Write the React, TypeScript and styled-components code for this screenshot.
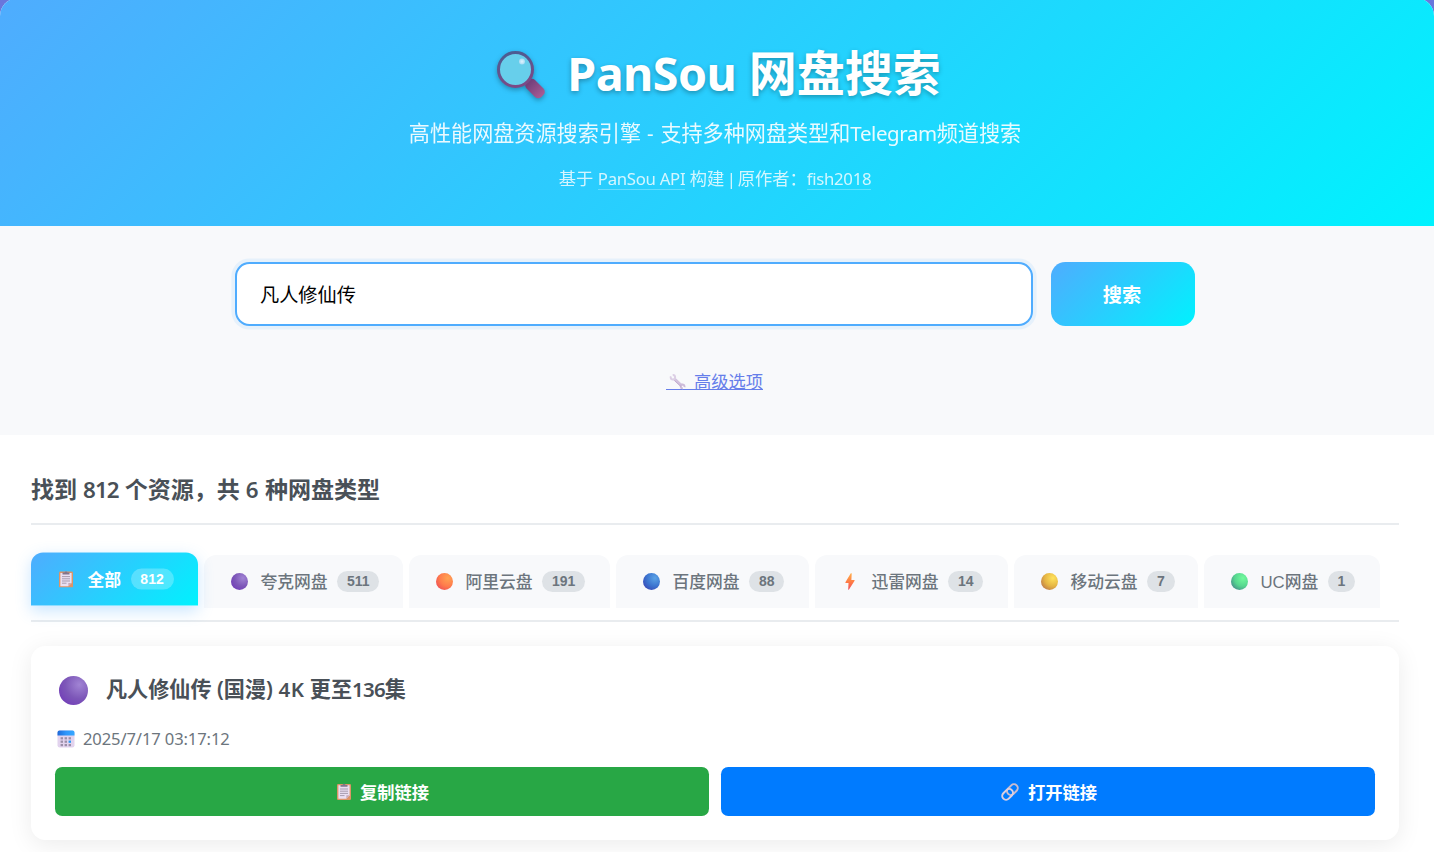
import React, { useState } from 'react';
import styled, { createGlobalStyle, css } from 'styled-components';

const brand = 'linear-gradient(135deg, #4facfe 0%, #00f2fe 100%)';

const GlobalStyle = createGlobalStyle`
  * { box-sizing: border-box; margin: 0; padding: 0; }
  html { background: #6a76dc; }
  body {
    margin: 0;
    height: 852px;
    overflow: hidden;
    font-family: 'Noto Sans', 'Noto Sans CJK SC', sans-serif;
    background: #6a76dc;
  }
`;

const Page = styled.div`
  width: 1434px;
  height: 854px;
  margin-top: -2px;
  background: #fff;
  border-radius: 18px 18px 0 0;
  overflow: hidden;
`;

const Header = styled.header`
  height: 228px;
  padding-top: 40px;
  background: ${brand};
  color: #fff;
  display: flex;
  flex-direction: column;
  align-items: center;
`;

const Title = styled.h1`
  display: flex;
  align-items: center;
  height: 70px;
  padding-left: 3px;
  font-size: 48px;
  font-weight: 700;
  line-height: 70px;
  white-space: pre;
  text-shadow: 0 2.4px 4.8px rgba(0, 0, 0, 0.3);
  svg {
    margin: 6px 21px 0 0;
    filter: drop-shadow(0 2.4px 2.4px rgba(0, 0, 0, 0.3));
  }
`;

const Latin = styled.span<{ $track?: number; $size?: string }>`
  font-size: ${(p) => p.$size ?? '0.97em'};
  letter-spacing: ${(p) => p.$track ?? 0}px;
`;

const Subtitle = styled.p`
  height: 32px;
  margin-top: 9px;
  padding-right: 4px;
  font-size: 21.12px;
  line-height: 32px;
  opacity: 0.9;
  white-space: pre;
`;

const Credit = styled.p`
  height: 26px;
  margin-top: 17px;
  padding-right: 4px;
  font-size: 17.28px;
  line-height: 26px;
  opacity: 0.8;
  white-space: pre;
`;

const CreditLink = styled.a`
  display: inline-block;
  height: 23px;
  line-height: 23px;
  color: #fff;
  text-decoration: none;
  border-bottom: 1px solid rgba(255, 255, 255, 0.35);
`;

const SearchSection = styled.section`
  height: 209px;
  padding-top: 36px;
  background: #f8f9fb;
  display: flex;
  flex-direction: column;
  align-items: center;
`;

const SearchForm = styled.form`
  display: flex;
  gap: 18px;
  width: 960px;
  margin-right: 4px;
`;

const SearchInput = styled.input`
  flex: 1;
  height: 64px;
  padding: 0 23px;
  border: 2px solid #4facfe;
  border-radius: 14.4px;
  background: #fff;
  color: #000;
  font: 19.2px 'Noto Sans CJK SC', sans-serif;
  outline: none;
  box-shadow: 0 0 0 3.6px rgba(79, 172, 254, 0.1);
`;

const SearchButton = styled.button`
  width: 144px;
  height: 64px;
  padding-right: 2px;
  border: 0;
  border-radius: 14.4px;
  background: ${brand};
  color: #fff;
  font: 700 19.2px 'Noto Sans CJK SC', sans-serif;
`;

const AdvancedLink = styled.a`
  display: flex;
  align-items: flex-start;
  height: 22px;
  margin: 42px 5px 0 0;
  border-bottom: 1px solid #667eea;
  color: #667eea;
  font-size: 17.28px;
  line-height: 27px;
  svg { margin: 5px 7px 0 3px; }
`;

const Results = styled.main`
  padding: 31px 35px 0 31px;
`;

const Heading = styled.h2`
  height: 59px;
  padding-top: 6px;
  border-bottom: 2px solid #e9ecef;
  color: #495057;
  font-size: 23.04px;
  font-weight: 600;
  line-height: 34px;
  white-space: pre;
`;

const TabBar = styled.nav`
  display: flex;
  gap: 6px;
  height: 97px;
  padding-top: 30px;
  border-bottom: 2px solid #e9ecef;
`;

const Tab = styled.button<{ $width: number; $active?: boolean }>`
  display: flex;
  align-items: center;
  width: ${(p) => p.$width}px;
  height: 53px;
  padding-left: 24px;
  border: 0;
  border-radius: 12px 12px 0 0;
  background: #f8f9fb;
  color: #6c757d;
  font-family: 'Liberation Sans', 'Noto Sans CJK SC', sans-serif;
  font-size: 16.8px;
  font-weight: 500;
  white-space: nowrap;
  ${(p) =>
    p.$active &&
    css`
      background: ${brand};
      color: #fff;
      font-weight: 700;
      transform: translateY(-2.4px);
      box-shadow: 0 4.8px 14.4px rgba(79, 172, 254, 0.3);
    `}
`;

const TabIcon = styled.span`
  display: flex;
  justify-content: center;
  width: 22px;
  margin-right: 10.4px;
`;

const TabLabel = styled.span`
  padding-bottom: 2px;
`;

const Count = styled.span<{ $active?: boolean }>`
  margin-left: 9.6px;
  padding: 0 9.8px;
  height: 21px;
  border-radius: 12px;
  background: ${(p) => (p.$active ? 'rgba(255,255,255,0.25)' : '#dee2e6')};
  font: 700 14px/21px 'Liberation Sans', sans-serif;
`;

const Card = styled.article`
  height: 194px;
  margin-top: 24px;
  padding: 24px;
  border-radius: 14.4px;
  background: #fff;
  box-shadow: 0 4.8px 24px rgba(0, 0, 0, 0.08);
`;

const CardTitle = styled.h3`
  display: flex;
  align-items: center;
  height: 38px;
  padding-left: 4px;
  color: #495057;
  font-size: 21.12px;
  font-weight: 600;
  line-height: 38px;
  white-space: pre;
  svg { margin: 3px 18px 0 0; }
`;

const CardMeta = styled.div`
  display: flex;
  align-items: center;
  height: 24px;
  margin-top: 19px;
  padding-left: 2px;
  color: #6c757d;
  font-size: 16.6px;
  letter-spacing: -0.13px;
  line-height: 24px;
  svg { margin-right: 8px; }
`;

const Actions = styled.div`
  display: grid;
  grid-template-columns: 1fr 1fr;
  gap: 12px;
  margin-top: 16px;
`;

const ActionButton = styled.button<{ $color: string }>`
  display: flex;
  align-items: center;
  justify-content: center;
  gap: 9px;
  height: 49px;
  padding-left: 2px;
  border: 0;
  border-radius: 7.2px;
  background: ${(p) => p.$color};
  color: #fff;
  font: 700 17.28px 'Noto Sans CJK SC', sans-serif;
`;

const Magnifier = () => (
  <svg width="50" height="50" viewBox="0 0 50 50">
    <defs>
      <linearGradient id="rim" x1="0" y1="0" x2="0.3" y2="1">
        <stop offset="0" stopColor="#465f94" />
        <stop offset="1" stopColor="#7b4a86" />
      </linearGradient>
      <linearGradient id="grip" x1="0" y1="0" x2="1" y2="0">
        <stop offset="0" stopColor="#6c3d78" />
        <stop offset="1" stopColor="#a85c94" />
      </linearGradient>
      <radialGradient id="glint">
        <stop offset="0" stopColor="#e0f4ff" />
        <stop offset="1" stopColor="#a8dcf5" />
      </radialGradient>
    </defs>
    <path d="M29 30l4 4" stroke="#62608a" strokeWidth="4" />
    <rect x="28.5" y="31.5" width="21" height="12" rx="4.5" fill="url(#grip)" transform="rotate(45 39 37.5)" />
    <circle cx="19.5" cy="18.5" r="17" fill="#67cfeb" stroke="url(#rim)" strokeWidth="3" />
    <circle cx="26" cy="10.5" r="3" fill="url(#glint)" />
  </svg>
);

const Wrench = () => (
  <svg width="18" height="18" viewBox="0 0 18 18">
    <path d="M5 5.500l8 7.500" stroke="#d3c3de" strokeWidth="3" />
    <circle cx="3.9" cy="4.3" r="2.2" fill="none" stroke="#dccfe5" strokeWidth="2" strokeDasharray="10.4 3.4" transform="rotate(-95 3.9 4.3)" />
    <circle cx="13.6" cy="13.4" r="1.9" fill="none" stroke="#cdbbd9" strokeWidth="2" strokeDasharray="9 2.94" transform="rotate(82 13.6 13.4)" />
    <path d="M5.500 7.500l6.500 6" stroke="#bda5cc" strokeWidth="0.9" />
  </svg>
);

const Clipboard = () => (
  <svg width="14" height="17" viewBox="0 0 14 17">
    <rect x="0" y="1" width="14" height="16" rx="1.2" fill="#dd9467" />
    <path d="M1.400 2.300h11.200v10L9.300 15.700H1.400z" fill="#eadff2" />
    <path d="M12.600 12.300 9.300 15.700v-3.400z" fill="#c9a9b8" />
    <path d="M3.500 3.800V1.900h2a1.600 1.600 0 0 1 3 0h2v1.900z" fill="#82758c" />
    <path d="M3 6h8M3 8.200h8M3 10.400h8M3 12.600h4.500" stroke="#a79caf" strokeWidth="1" />
  </svg>
);

const ballColors: Record<string, [string, string, string]> = {
  purple: ['#a184d4', '#7d57b8', '#7340b8'],
  orange: ['#ffa352', '#ff7c4c', '#f05454'],
  blue: ['#5ba3e6', '#3b74cf', '#3a4cb8'],
  yellow: ['#ffe35c', '#e5b544', '#c07f4a'],
  green: ['#72fa9d', '#56d68f', '#47928a'],
};

const Ball = ({ color, size = 17 }: { color: string; size?: number }) => {
  const [light, mid, dark] = ballColors[color];
  const id = `ball-${color}-${size}`;
  return (
    <svg width={size} height={size} viewBox="0 0 20 20">
      <defs>
        <radialGradient id={id} cx="0.7" cy="0.3" r="0.8">
          <stop offset="0" stopColor={light} />
          <stop offset="0.6" stopColor={mid} />
          <stop offset="1" stopColor={dark} />
        </radialGradient>
      </defs>
      <circle cx="10" cy="10" r="10" fill={`url(#${id})`} />
    </svg>
  );
};

const Bolt = () => (
  <svg width="10" height="17" viewBox="0 0 10 17">
    <defs>
      <linearGradient id="bolt" x1="0" y1="0" x2="0" y2="1">
        <stop offset="0" stopColor="#ffb04a" />
        <stop offset="0.55" stopColor="#ff7a45" />
        <stop offset="1" stopColor="#ef5060" />
      </linearGradient>
    </defs>
    <path d="M5.800.3 0.400 9.200c-.2.400 0 .700.4.700h2.700L3.200 16.600c.2.300.6.200.8-.1l5.600-8.800c.2-.4 0-.7-.4-.7H6.400L6.700.6C6.600.1 6 0 5.800.300z" fill="url(#bolt)" />
  </svg>
);

const Calendar = () => (
  <svg width="18" height="18" viewBox="0 0 18 18">
    <defs>
      <linearGradient id="cal" x1="0" y1="0" x2="1" y2="0">
        <stop offset="0" stopColor="#1e69d8" />
        <stop offset="0.5" stopColor="#2f96fb" />
        <stop offset="1" stopColor="#35a7ff" />
      </linearGradient>
    </defs>
    <rect x="0.5" y="0.5" width="17" height="17" rx="2.2" fill="#e2d3ee" />
    <path d="M.5 5.600V2.500a2 2 0 0 1 2-2h13a2 2 0 0 1 2 2v3.100z" fill="url(#cal)" />
    <g fill="#9b8fa8">
      {[7.2, 10.6, 14].map((y) =>
        [3.6, 7.6, 11.6].map((x) => (
          <rect key={`${x}-${y}`} x={x} y={y} width="2.4" height="2.2" fill={x > 11 && y > 10 && y < 11 ? '#269af5' : undefined} />
        )),
      )}
    </g>
  </svg>
);

const Chain = () => (
  <svg width="18" height="18" viewBox="0 0 18 18" fill="none" strokeWidth="2">
    <rect x="5.4" y="2.8" width="12" height="7.6" rx="3.8" stroke="#c9bccf" transform="rotate(-45 11.4 6.6)" />
    <rect x="0.6" y="7.6" width="12" height="7.6" rx="3.8" stroke="#dccfe0" transform="rotate(-45 6.6 11.4)" />
  </svg>
);

const tabs = [
  { id: 'all', label: '全部', count: 812, width: 167, icon: <Clipboard /> },
  { id: 'quark', label: '夸克网盘', count: 511, width: 199, icon: <Ball color="purple" /> },
  { id: 'aliyun', label: '阿里云盘', count: 191, width: 201, icon: <Ball color="orange" /> },
  { id: 'baidu', label: '百度网盘', count: 88, width: 193, icon: <Ball color="blue" /> },
  { id: 'xunlei', label: '迅雷网盘', count: 14, width: 193, icon: <Bolt /> },
  { id: 'mobile', label: '移动云盘', count: 7, width: 184, icon: <Ball color="yellow" /> },
  { id: 'uc', label: 'UC网盘', count: 1, width: 176, icon: <Ball color="green" /> },
];

export default function App() {
  const [active, setActive] = useState('all');
  const [query, setQuery] = useState('凡人修仙传');

  return (
    <>
      <GlobalStyle />
      <Page>
        <Header>
          <Title>
            <Magnifier />
            <Latin $track={-0.5}>PanSou</Latin>
            <span> 网盘搜索</span>
          </Title>
          <Subtitle>
            高性能网盘资源搜索引擎<Latin $track={0.7}> - </Latin>支持多种网盘类型和<Latin $track={-0.4}>Telegram</Latin>频道搜索
          </Subtitle>
          <Credit>
            基于 <CreditLink><Latin $track={-0.3}>PanSou API</Latin></CreditLink> 构建<Latin $track={-2}> |</Latin><Latin $track={-0.5}> </Latin>原作者：
            <CreditLink><Latin $track={-0.3}>fish2018</Latin></CreditLink>
          </Credit>
        </Header>

        <SearchSection>
          <SearchForm onSubmit={(e) => e.preventDefault()}>
            <SearchInput value={query} onChange={(e) => setQuery(e.target.value)} />
            <SearchButton type="submit">搜索</SearchButton>
          </SearchForm>
          <AdvancedLink>
            <Wrench />
            高级选项
          </AdvancedLink>
        </SearchSection>

        <Results>
          <Heading>
            找到 <Latin $track={-0.9}>812</Latin> 个资源，共 <Latin $track={0.3}>6</Latin> 种网盘类型
          </Heading>
          <TabBar>
            {tabs.map((t) => (
              <Tab key={t.id} $width={t.width} $active={t.id === active} onClick={() => setActive(t.id)}>
                <TabIcon>{t.icon}</TabIcon>
                <TabLabel>{t.label}</TabLabel>
                <Count $active={t.id === active}>{t.count}</Count>
              </Tab>
            ))}
          </TabBar>
          <Card>
            <CardTitle>
              <Ball color="purple" size={29} />
              <span>
                凡人修仙传 (国漫) <Latin $track={0.5}>4K</Latin> 更至<Latin $track={-0.8}>136</Latin>集
              </span>
            </CardTitle>
            <CardMeta>
              <Calendar />
              2025/7/17 03:17:12
            </CardMeta>
            <Actions>
              <ActionButton $color="#28a745"><Clipboard />复制链接</ActionButton>
              <ActionButton $color="#007bff"><Chain />打开链接</ActionButton>
            </Actions>
          </Card>
        </Results>
      </Page>
    </>
  );
}
